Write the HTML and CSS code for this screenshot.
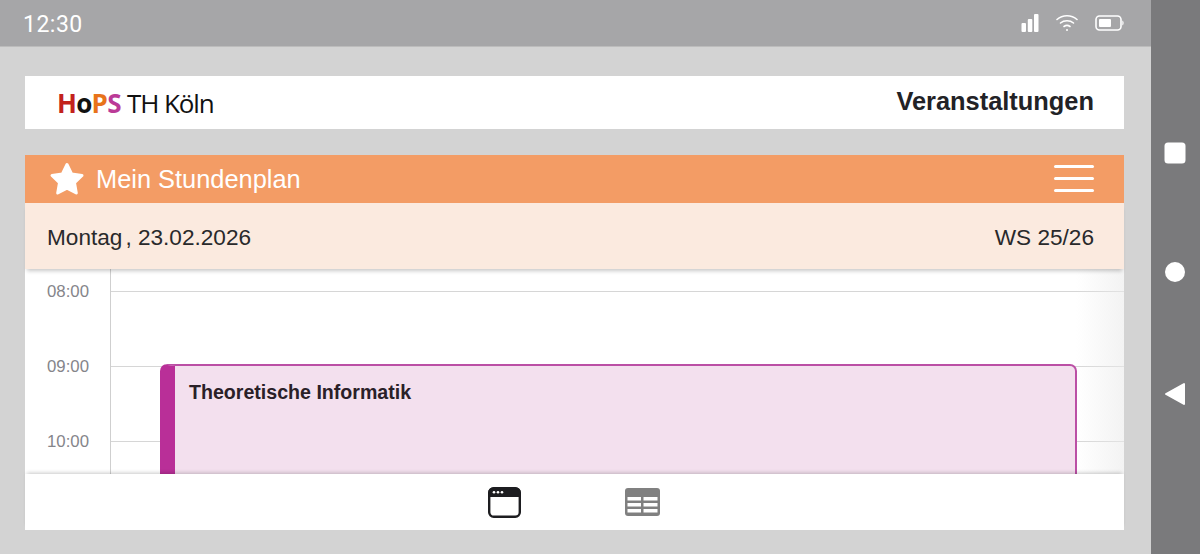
FILE: index.html
```html
<!DOCTYPE html>
<html lang="de">
<head>
    <meta charset="UTF-8">
    <meta name="viewport" content="width=device-width, initial-scale=1.0">
    <title>Mein Stundenplan</title>
    <link rel="stylesheet" href="styles.css">
</head>

<body>

    <div class="screen">

        <!-- Status Bar -->
        <div class="statusbar">
            <span class="clock">12:30</span>
            <div class="status-icons">
                <svg width="18" height="20" viewBox="0 0 18 20">
                    <rect x="0.5" y="10" width="4.5" height="9" rx="1" fill="#fff"/>
                    <rect x="6.8" y="6" width="4.5" height="13" rx="1" fill="#fff"/>
                    <rect x="13" y="1" width="4.5" height="18" rx="1" fill="#fff"/>
                </svg>
                <svg width="22" height="18" viewBox="0 0 22 18" fill="none" stroke="#fff" stroke-width="1.6" stroke-linecap="round">
                    <path d="M1 5.5 C6.5 0.5 15.5 0.5 21 5.5"/>
                    <path d="M4.5 9 C8 6 14 6 17.5 9"/>
                    <path d="M8 12.5 C9.8 11.2 12.2 11.2 14 12.5"/>
                    <circle cx="11" cy="16" r="1" fill="#fff" stroke="none"/>
                </svg>
                <svg width="29" height="16" viewBox="0 0 29 16">
                    <rect x="1" y="1" width="25" height="14" rx="3.5" fill="none" stroke="#fff" stroke-width="1.6"/>
                    <rect x="4" y="4" width="12" height="8" rx="1" fill="#fff"/>
                    <path d="M27.3 5.5 C28.3 6 28.6 7 28.6 8 C28.6 9 28.3 10 27.3 10.5 Z" fill="#fff"/>
                </svg>
            </div>
        </div>

        <div class="content">

            <!-- Header -->
            <header class="header">
                <div class="logo"><b class="red">H</b><b>o</b><b class="orange">P</b><b class="pink">S</b> <span class="logo-name">TH Köln</span></div>
                <div class="page-title">Veranstaltungen</div>
            </header>

            <!-- Calendar Panel -->
            <section class="panel">
                <div class="panel-bar">
                    <div class="panel-title">
                        <svg width="36" height="34" viewBox="0 0 36 34">
                            <path d="M18 2.5 L22.6 12 L33 13.5 L25.5 20.8 L27.3 31 L18 26.1 L8.7 31 L10.5 20.8 L3 13.5 L13.4 12 Z" fill="#fff" stroke="#fff" stroke-width="3" stroke-linejoin="round"/>
                        </svg>
                        <span>Mein Stundenplan</span>
                    </div>
                    <div class="burger"><i></i><i></i><i></i></div>
                </div>

                <div class="date-bar">
                    <span>Montag<span class="comma">,</span> 23.02.2026</span>
                    <span>WS 25/26</span>
                </div>

                <div class="calendar">
                    <div class="hour"><span class="time">08:00</span><span class="line"></span></div>
                    <div class="hour"><span class="time">09:00</span><span class="line"></span></div>
                    <div class="hour"><span class="time">10:00</span><span class="line"></span></div>
                    <div class="event">
                        <div class="event-title">Theoretische Informatik</div>
                    </div>
                    <div class="calendar-fade"></div>
                </div>

                <!-- Bottom Tabs -->
                <div class="tabs">
                    <svg width="33" height="31" viewBox="0 0 33 31">
                        <rect x="1.2" y="1.2" width="30.6" height="28.6" rx="4.5" fill="#fff" stroke="#1d1d20" stroke-width="2.4"/>
                        <path d="M1.2 9 V5.7 A4.5 4.5 0 0 1 5.7 1.2 H27.3 A4.5 4.5 0 0 1 31.8 5.7 V9 Z" fill="#1d1d20" stroke="#1d1d20" stroke-width="2"/>
                        <circle cx="6" cy="5.3" r="1.3" fill="#fff"/>
                        <circle cx="10" cy="5.3" r="1.3" fill="#fff"/>
                        <circle cx="14" cy="5.3" r="1.3" fill="#fff"/>
                    </svg>
                    <svg width="35" height="28" viewBox="0 0 35 28">
                        <rect x="0" y="0" width="35" height="28" rx="3" fill="#808080"/>
                        <g fill="#fff">
                            <rect x="2.5" y="9" width="13.5" height="3.5"/>
                            <rect x="18.5" y="9" width="14" height="3.5"/>
                            <rect x="2.5" y="15" width="13.5" height="3.5"/>
                            <rect x="18.5" y="15" width="14" height="3.5"/>
                            <rect x="2.5" y="21" width="13.5" height="3.5"/>
                            <rect x="18.5" y="21" width="14" height="3.5"/>
                        </g>
                    </svg>
                </div>
            </section>

        </div>
    </div>

    <!-- Android Navigation -->
    <nav class="navbar">
        <svg width="22" height="22" viewBox="0 0 22 22"><rect x="0.5" y="0.5" width="21" height="21" rx="3.5" fill="#fff"/></svg>
        <svg width="20" height="20" viewBox="0 0 20 20"><circle cx="10" cy="10" r="10" fill="#fff"/></svg>
        <svg class="nav-back" width="22" height="24" viewBox="0 0 22 24"><path d="M20 2 V22 L2 12 Z" fill="#fff" stroke="#fff" stroke-width="2" stroke-linejoin="round"/></svg>
    </nav>

</body>
</html>
```

FILE: styles.css
```css
body {
    font-family: "Liberation Sans", Arial, sans-serif;
    margin: 0;
    width: 1200px;
    height: 554px;
    overflow: hidden;
    display: flex;
    background-color: #d3d3d3;
}

.screen {
    flex: 1;
    display: flex;
    flex-direction: column;
}

/* Status Bar */
.statusbar {
    height: 46px;
    background-color: #a6a6a8;
    border-bottom: 1px solid #bcbcbc;
    display: flex;
    align-items: center;
    justify-content: space-between;
    padding: 0 27px 0 23px;
    color: #fff;
}

.clock {
    font-family: Roboto, sans-serif;
    font-size: 23px;
    letter-spacing: 0.5px;
    margin-top: 2px;
}

.status-icons {
    display: flex;
    align-items: center;
    gap: 17px;
}

/* Main Content */
.content {
    flex: 1;
    padding: 29px 27px 24px 25px;
    display: flex;
    flex-direction: column;
    gap: 26px;
}

.header {
    height: 53px;
    background-color: #fff;
    display: flex;
    align-items: center;
    justify-content: space-between;
    padding: 0 30px 0 32px;
}

.logo {
    font-family: "Open Sans", sans-serif;
    font-size: 26px;
    letter-spacing: -0.7px;
    color: #111;
}

.logo b {
    font-weight: 700;
}

.logo .red { color: #c3221c; }
.logo .orange { color: #e8731a; }
.logo .pink { color: #bb3a97; }

.logo-name {
    letter-spacing: -1.1px;
}

.page-title {
    font-size: 25.4px;
    font-weight: bold;
    color: #222226;
    margin-top: -3px;
}

/* Panel */
.panel {
    flex: 1;
    display: flex;
    flex-direction: column;
}

.panel-bar {
    height: 48px;
    background-color: #f39c65;
    display: flex;
    align-items: center;
    justify-content: space-between;
    padding: 0 30px 0 24px;
    color: #fff;
}

.panel-title {
    display: flex;
    align-items: center;
    gap: 11px;
    font-size: 25.4px;
}

.panel-title svg {
    margin-top: -1px;
}

.burger {
    display: flex;
    flex-direction: column;
    gap: 9px;
    margin-top: -1px;
}

.burger i {
    display: block;
    width: 40px;
    height: 3px;
    border-radius: 2px;
    background-color: #fff;
}

.date-bar {
    height: 66px;
    box-sizing: border-box;
    padding: 4px 30px 0 22px;
    background-color: #fbeadf;
    display: flex;
    align-items: center;
    justify-content: space-between;
    font-size: 22.6px;
    color: #29292b;
    box-shadow: 0 4px 4px -2px rgba(0, 0, 0, 0.22);
    position: relative;
    z-index: 2;
}

.comma {
    margin-left: 3px;
}

/* Calendar */
.calendar {
    height: 205px;
    background-color: #fff;
    position: relative;
    overflow: hidden;
    padding-top: 22px;
    box-sizing: border-box;
}

.calendar::before {
    content: "";
    position: absolute;
    left: 85px;
    top: 0;
    bottom: 0;
    border-left: 1px solid #cfcfcf;
}

.hour {
    height: 75px;
    display: flex;
    align-items: flex-start;
}

.time {
    width: 86px;
    box-sizing: border-box;
    padding-left: 22px;
    font-size: 16.8px;
    line-height: 18px;
    margin-top: -8px;
    color: #85858a;
}

.line {
    flex: 1;
    border-top: 1px solid #d6d6d6;
}

.event {
    position: absolute;
    left: 135px;
    top: 95px;
    width: 917px;
    height: 130px;
    box-sizing: border-box;
    background-color: #f3e0ee;
    border: 2px solid #bb4fa5;
    border-left: 15px solid #b92f98;
    border-radius: 7px;
    padding: 15px 14px;
}

.event-title {
    font-size: 19.6px;
    font-weight: bold;
    line-height: 22px;
    color: #2a2028;
}

.calendar-fade {
    position: absolute;
    top: 0;
    right: 0;
    bottom: 0;
    width: 48px;
    background: linear-gradient(to right, rgba(235, 235, 235, 0), rgba(235, 235, 235, 0.6));
}

/* Bottom Tabs */
.tabs {
    height: 56px;
    background-color: #fff;
    display: flex;
    align-items: center;
    justify-content: center;
    gap: 104px;
    padding-right: 2px;
    box-shadow: 0 -3px 4px -2px rgba(0, 0, 0, 0.22);
    position: relative;
    z-index: 2;
}

/* Android Nav */
.navbar {
    width: 49px;
    background-color: #7a7a7c;
    display: flex;
    flex-direction: column;
    align-items: center;
    padding: 142px 2px 0 0;
    box-sizing: border-box;
    gap: 98px;
}

.nav-back {
    margin-top: 2px;
}
```
